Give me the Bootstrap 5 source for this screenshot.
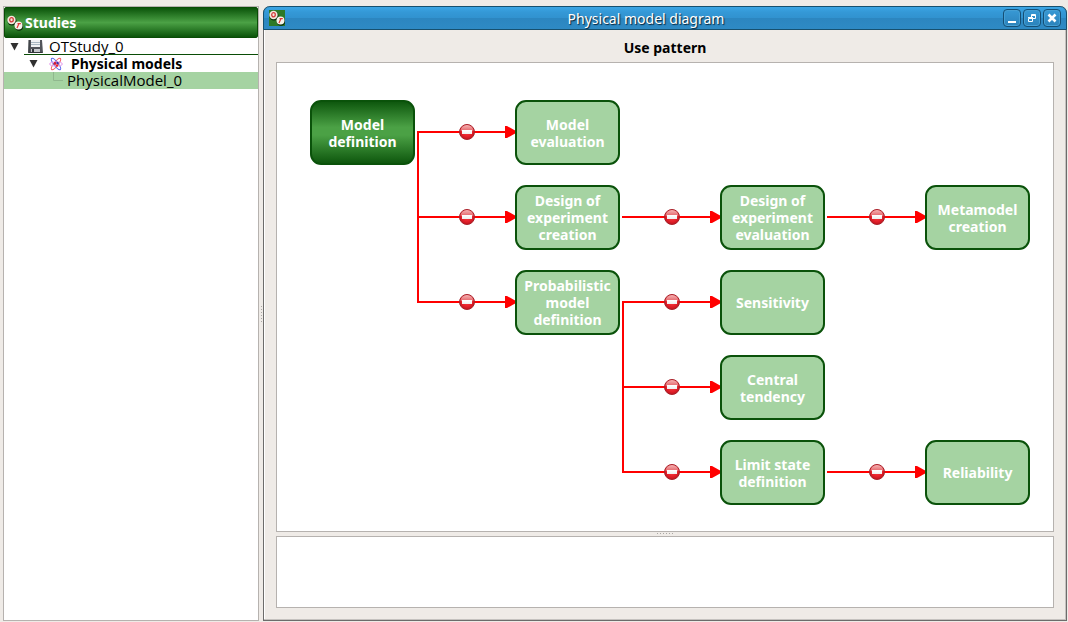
<!DOCTYPE html>
<html lang="en">
<head>
<meta charset="utf-8">
<meta name="viewport" content="width=device-width, initial-scale=1">
<title>Physical model diagram</title>
<link href="https://cdn.jsdelivr.net/npm/bootstrap@5.3.0/dist/css/bootstrap.min.css" rel="stylesheet">
<style>
  body { background: #efebe7; color: #000; font: 14px/17px "Noto Sans", "Open Sans", sans-serif; padding: 6px 1px 1px 3px; }
  .studies { flex: 0 0 256px; background: #fff; border: 1px solid #b6b2af; }
  .studies-head { height: 31px; padding-left: 2px; gap: 2px; border: 1px solid #0a4d06; border-radius: 2px; background: linear-gradient(#0b540a, #4ba145 50%, #0b540a); color: #fff; font-size: 14px; font-weight: 700; }
  .tree-row { height: 17px; white-space: nowrap; }
  .tree-row svg, .studies-head svg, .title-bar svg { flex: none; }
  .tree-label { font-family: "Open Sans", "Noto Sans", sans-serif; font-size: 15px; }
  .study-name { border-bottom: 1px solid #0a4d06; gap: 6px; padding-left: 4px; }
  .tree-toggle { border: 0; background: none; padding: 0; width: 20px; line-height: 0; flex: none; }
  .tree-group { padding-left: 25px; }
  .tree-model { background: #a5d3a2; padding-left: 49px; }
  .grip-v { width: 4px; }
  .sub-window { border: 1px solid #6d6c6b; border-top: 0; box-shadow: inset -1px -1px #c5c2bf, inset 1px 0 #fff; border-radius: 7px 7px 0 0; }
  .title-bar { height: 24px; margin: 0 -1px; padding: 0 5px; border: 1px solid #17506f; border-radius: 7px 7px 0 0; background: linear-gradient(#3ba5e4, #3498d6 25%, #3192cf 50%, #2c86c0 52%, #2e8ac5); color: #fff; }
  .title-text { font-size: 14px; text-shadow: 1px 1px 1px #072438; }
  .win-buttons { gap: 2px; }
  .win-btn { width: 18px; height: 18px; padding: 0; border: 1px solid #154f75; border-radius: 4px; background: linear-gradient(#3899d5, #2b82ba); box-shadow: inset 0 0 0 1px #459fd4; line-height: 0; }
  .win-body { padding: 0 12px 12px; }
  .pattern-title { font-size: 14px; line-height: 20px; padding: 8px 0 4px; margin: 0; font-weight: 700; }
  .pane { background: #fff; border: 1px solid #b6b2af; }
  .pane-log { height: 72px; }
  .grip-h { height: 4px; line-height: 0; }
  .scene { width: 730px; height: 416px; padding: 11px 0 0 10px; grid-template-columns: repeat(4, 105px); grid-template-rows: repeat(5, 65px); gap: 20px 100px; flex: none; }
  .node { position: relative; padding: 0; border: 2px solid #0a520a; border-radius: 11px; background: #a5d3a2; color: #fff; font-size: 14px; line-height: 17px; font-weight: 700; white-space: nowrap; }
  .node-active { background: linear-gradient(#0a520a, #4ba145 42%, #4ba145 54%, #0a520a) border-box; }
  .c2 { grid-column: 2; } .c3 { grid-column: 3; } .c4 { grid-column: 4; }
  .r1 { grid-row: 1; } .r2 { grid-row: 2; } .r3 { grid-row: 3; } .r4 { grid-row: 4; } .r5 { grid-row: 5; }
</style>
<script src="https://cdn.jsdelivr.net/npm/bootstrap@5.3.0/dist/js/bootstrap.bundle.min.js"></script>
</head>
<body class="d-flex vh-100">
<svg width="0" height="0" class="position-absolute" aria-hidden="true">
  <defs>
    <radialGradient id="red" cx=".5" cy=".45" r=".6"><stop offset="0" stop-color="#f44"/><stop offset=".6" stop-color="#e3202a"/><stop offset="1" stop-color="#b3101a"/></radialGradient>
    <linearGradient id="gloss" x2="0" y2="1"><stop offset="0" stop-color="#f3b4b4"/><stop offset="1" stop-color="#e4585e"/></linearGradient>
    <linearGradient id="bar" x2="0" y2="1"><stop offset="0" stop-color="#fff"/><stop offset="1" stop-color="#eee"/></linearGradient>
    <symbol id="blocked" viewBox="0 0 16 16">
      <circle cx="8" cy="8" r="7.500" fill="url(#red)" stroke="#a8222a"/>
      <path d="M1.500 7A6.500 6 0 0 1 14.500 7Q8 8.500 1.500 7Z" fill="url(#gloss)"/>
      <rect x="3" y="6" width="10" height="4" fill="url(#bar)"/>
    </symbol>
    <symbol id="arrow" viewBox="0 0 11 12"><path d="M0 0H2L11 5V7L2 12H0Z" fill="red"/></symbol>
    <symbol id="logo" viewBox="0 0 16 16">
      <circle cx="5" cy="6" r="4.500" fill="#082c08"/><circle cx="12" cy="11.500" r="4.300" fill="#082c08"/>
      <circle cx="4.500" cy="5" r="4.200" fill="#f4e9dc"/><circle cx="11.500" cy="10.500" r="4" fill="#f6f3ea"/>
      <ellipse cx="4.500" cy="4.800" rx="1.800" ry="2.100" fill="none" stroke="#d43b3b" stroke-width="1.300"/>
      <path d="M10 13L12 8.500M10.500 8.700L13.800 8.700" fill="none" stroke="#e03434" stroke-width="1.200"/>
    </symbol>
  </defs>
</svg>

<aside class="studies">
  <header class="studies-head d-flex align-items-center">
    <svg width="16" height="16" aria-hidden="true"><use href="#logo"/></svg>
    <span>Studies</span>
  </header>
  <div class="tree-row d-flex">
    <button class="tree-toggle" type="button" aria-label="Collapse study"><svg width="9" height="8"><path d="M.5 0H8.500L4.500 7.500Z" fill="#303030"/></svg></button>
    <div class="study-name d-flex flex-grow-1 align-items-center">
      <svg width="15" height="15" viewBox="0 0 15 15" aria-hidden="true">
        <path d="M1 1H14L15 14H0Z" fill="#52555b"/><rect x="3" y="1" width="9" height="7" fill="#f0f2f3"/><path d="M3 3.500H12M3 5.500H12" stroke="#a9b8c2"/><rect x="3" y="10" width="9" height="4" fill="#c5c8cc"/><rect x="4" y="10" width="2" height="3" fill="#33363b"/><path d="M1 1V13.500H14" fill="none" stroke="#33363b"/>
      </svg>
      <span class="tree-label">OTStudy_0</span>
    </div>
  </div>
  <div class="tree-row tree-group d-flex align-items-center">
    <button class="tree-toggle text-start" type="button" aria-label="Collapse physical models"><svg width="9" height="8"><path d="M.5 0H8.500L4.500 7.500Z" fill="#303030"/></svg></button>
    <svg width="14" height="14" viewBox="0 0 14 14" aria-hidden="true" fill="none">
      <ellipse cx="7" cy="7" rx="2" ry="7" transform="rotate(38 7 7)" stroke="#f35b62"/>
      <ellipse cx="7" cy="7" rx="2" ry="7" transform="rotate(-38 7 7)" stroke="#5966ee"/>
      <ellipse cx="7" cy="7" rx="6.500" ry="2" stroke="#e49aec"/>
      <circle cx="6" cy="6.500" r="1.400" fill="#d51b34"/><circle cx="8.500" cy="6" r="1.200" fill="#3a2da8"/><circle cx="8" cy="8.500" r="1.300" fill="#ed2727"/>
    </svg>
    <strong class="ps-1 ms-1">Physical models</strong>
  </div>
  <div class="tree-row tree-model d-flex">
    <svg width="14" height="17" aria-hidden="true"><path d="M.5 0V8.500H10" fill="none" stroke="#90b88e"/></svg>
    <span class="tree-label">PhysicalModel_0</span>
  </div>
</aside>

<div class="grip-v d-flex align-items-center" aria-hidden="true">
  <svg width="4" height="18"><path d="M2.500 1V18" stroke="#aaa7a4" stroke-dasharray="1 2"/></svg>
</div>

<main class="sub-window d-flex flex-column flex-grow-1">
  <header class="title-bar d-flex align-items-center">
    <svg width="16" height="16" viewBox="0 0 16 16" aria-hidden="true"><rect width="16" height="16" fill="#2d7928"/><use href="#logo"/></svg>
    <span class="title-text flex-grow-1 text-center ms-1">Physical model diagram</span>
    <div class="win-buttons d-flex">
      <button class="win-btn" type="button" aria-label="Minimize"><svg width="16" height="16"><path d="M4 11H12V13H4Z" fill="#fff"/></svg></button>
      <button class="win-btn" type="button" aria-label="Restore"><svg width="16" height="16" fill="none" stroke="#fff"><path d="M7.500 4.500H11.500V8.500H7.500ZM7 5.500H12M4.500 8.500H8.500V11.500H4.500ZM4 7.500H9"/></svg></button>
      <button class="win-btn" type="button" aria-label="Close"><svg width="16" height="16"><path d="M4.500 4.500L11.500 11.500M11.500 4.500L4.500 11.500" stroke="#fff" stroke-width="2.600"/></svg></button>
    </div>
  </header>
  <div class="win-body d-flex flex-column flex-grow-1">
    <h1 class="pattern-title text-center">Use pattern</h1>
    <section class="pane flex-grow-1 d-flex align-items-center justify-content-center">
      <div class="scene d-grid position-relative">
        <svg class="position-absolute top-0 start-0" width="730" height="416" aria-hidden="true">
          <path d="M206 43H118V213H206M118 128H206M322 128H411M527 128H616M411 213H323V383H411M323 298H411M527 383H616" fill="none" stroke="red" stroke-width="2"/>
          <g>
            <use href="#arrow" x="205" y="37" width="11" height="12"/><use href="#arrow" x="205" y="122" width="11" height="12"/><use href="#arrow" x="205" y="207" width="11" height="12"/>
            <use href="#arrow" x="410" y="122" width="11" height="12"/><use href="#arrow" x="410" y="207" width="11" height="12"/><use href="#arrow" x="410" y="292" width="11" height="12"/><use href="#arrow" x="410" y="377" width="11" height="12"/>
            <use href="#arrow" x="615" y="122" width="11" height="12"/><use href="#arrow" x="615" y="377" width="11" height="12"/>
          </g>
          <g>
            <use href="#blocked" x="159" y="35" width="16" height="16"/><use href="#blocked" x="159" y="120" width="16" height="16"/><use href="#blocked" x="159" y="205" width="16" height="16"/>
            <use href="#blocked" x="364" y="120" width="16" height="16"/><use href="#blocked" x="364" y="205" width="16" height="16"/><use href="#blocked" x="364" y="290" width="16" height="16"/><use href="#blocked" x="364" y="375" width="16" height="16"/>
            <use href="#blocked" x="569" y="120" width="16" height="16"/><use href="#blocked" x="569" y="375" width="16" height="16"/>
          </g>
        </svg>
        <button type="button" class="node node-active r1">Model<br>definition</button>
        <button type="button" class="node c2 r1">Model<br>evaluation</button>
        <button type="button" class="node c2 r2">Design of<br>experiment<br>creation</button>
        <button type="button" class="node c3 r2">Design of<br>experiment<br>evaluation</button>
        <button type="button" class="node c4 r2">Metamodel<br>creation</button>
        <button type="button" class="node c2 r3">Probabilistic<br>model<br>definition</button>
        <button type="button" class="node c3 r3">Sensitivity</button>
        <button type="button" class="node c3 r4">Central<br>tendency</button>
        <button type="button" class="node c3 r5">Limit state<br>definition</button>
        <button type="button" class="node c4 r5">Reliability</button>
      </div>
    </section>
    <div class="grip-h text-center" aria-hidden="true"><svg width="18" height="4"><path d="M1 1.500H18" stroke="#aaa7a4" stroke-dasharray="1 2"/></svg></div>
    <section class="pane pane-log" aria-label="Messages"></section>
  </div>
</main>
</body>
</html>
